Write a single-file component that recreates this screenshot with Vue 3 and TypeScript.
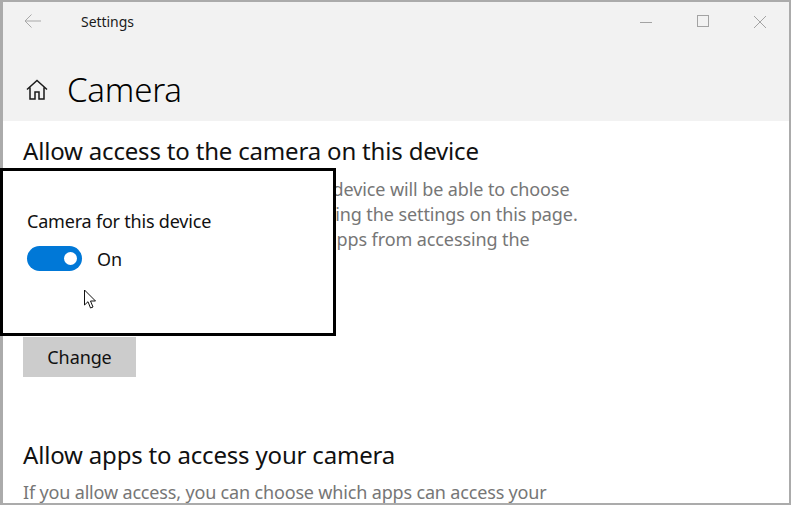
<script setup lang="ts">
interface IntroLine {
  covered: string
  shown: string
  tight: string
}

const intro: IntroLine[] = [
  { covered: 'If you allow access, people using this ', shown: 'device will be able to choose', tight: 'tight-a' },
  { covered: 'if their apps have camera access by us', shown: 'ing the settings on this page.', tight: 'tight-b' },
  { covered: 'Denying access blocks Microsoft Store ', shown: 'apps from accessing the', tight: 'tight-c' },
  { covered: 'camera.', shown: '', tight: '' },
]
</script>

<template>
  <div class="window">
    <header class="head">
      <div class="titlebar">
        <svg class="back" width="18" height="14" viewBox="0 0 18 14" fill="none" stroke="#a8a8a8" stroke-width="1">
          <path d="M1 7H17M7.500 .5L1 7l6.500 6.500" />
        </svg>
        <span class="app-title">Settings</span>
        <div class="controls">
          <svg width="14" height="14" viewBox="0 0 14 14" fill="none" stroke="#a3a3a3"><path d="M1 7.500H13" /></svg>
          <svg width="14" height="14" viewBox="0 0 14 14" fill="none" stroke="#a3a3a3"><rect x="1.500" y=".5" width="11" height="11" /></svg>
          <svg width="14" height="14" viewBox="0 0 14 14" fill="none" stroke="#a3a3a3"><path d="M1 1L13 13M13 1L1 13" /></svg>
        </div>
      </div>
      <div class="page-heading">
        <svg class="home" width="22" height="22" viewBox="0 0 22 22" fill="none" stroke="#1a1a1a" stroke-width="1.500">
          <path d="M1 10.500L11 1.500l10 9M4 8.500v11.500h5v-7h4v7h5V8.500" />
        </svg>
        <h1>Camera</h1>
      </div>
    </header>
    <main class="content">
      <h2>Allow access to the camera on this device</h2>
      <p class="body-text">
        <span v-for="line in intro" :key="line.covered" class="line"><span :class="line.tight">{{ line.covered }}</span>{{ line.shown }}</span>
      </p>
      <p class="status">Camera access for this device is on</p>
      <button class="change">Change</button>
      <h2 class="second">Allow apps to access your camera</h2>
      <p class="body-text last">If you allow access, you can choose which apps can access your</p>
    </main>
    <aside class="callout">
      <div class="callout-label">Camera for this device</div>
      <div class="toggle-row">
        <span class="toggle"><span class="knob"></span></span>
        <span class="toggle-text">On</span>
      </div>
      <svg class="cursor" width="14" height="20" viewBox="0 0 14 20" fill="#fff" stroke="#111" stroke-width="1">
        <path d="M1.500 1V16L5 12.700L7.500 19L10 18L7.500 12H12.500Z" />
      </svg>
    </aside>
  </div>
</template>

<style>
html, body { margin: 0; background: #fff; }
</style>

<style scoped>
.window {
  position: relative;
  display: flex;
  flex-direction: column;
  box-sizing: border-box;
  width: 791px;
  height: 505px;
  background: #fff;
  border: 2px solid #ababab;
  border-width: 2px 2px 2px 3px;
  font-family: "Noto Sans", "Open Sans", sans-serif;
  color: #000;
}
.head {
  flex: none;
  height: 119px;
  background: #f2f2f2;
}
.titlebar {
  display: flex;
  align-items: center;
  height: 38px;
  padding-left: 21px;
}
.back { flex: none; }
.app-title {
  margin-left: 39px;
  font-size: 14px;
  letter-spacing: -0.05px;
  color: #1a1a1a;
}
.controls {
  display: flex;
  gap: 43px;
  margin-left: auto;
  margin-right: 22px;
  margin-top: 1px;
}
.page-heading {
  display: flex;
  align-items: center;
  gap: 19px;
  height: 50px;
  padding: 25px 0 0 23px;
}
.home { flex: none; }
h1 {
  margin: 0;
  font-size: 33px;
  font-weight: 300;
  letter-spacing: -0.2px;
  line-height: 42px;
}
.content {
  flex: 1;
  min-height: 0;
  overflow: hidden;
  padding: 15px 0 0 20px;
}
h2 {
  margin: 0;
  font-size: 24px;
  font-weight: 400;
  letter-spacing: -0.18px;
  line-height: 30px;
  color: #111;
}
.body-text {
  margin: 11px 0 0;
  font-size: 18px;
  line-height: 25px;
  letter-spacing: -0.1px;
  color: #767676;
  white-space: nowrap;
}
.line { display: block; }
.tight-a { letter-spacing: -0.15px; }
.tight-b { letter-spacing: -0.26px; }
.tight-c { letter-spacing: -0.6px; }
.status {
  margin: 8px 0 0;
  font-size: 16px;
  line-height: 22px;
  color: #000;
}
.change {
  display: block;
  box-sizing: border-box;
  width: 113px;
  height: 40px;
  margin-top: 30px;
  padding: 0;
  border: 0;
  background: #cccccc;
  font: inherit;
  font-size: 18px;
  letter-spacing: -0.1px;
  color: #111;
}
.second { margin-top: 63px; }
.body-text.last {
  margin-top: 10px;
  letter-spacing: -0.165px;
}
.callout {
  position: absolute;
  left: -3px;
  top: 166px;
  box-sizing: border-box;
  width: 336px;
  height: 168px;
  padding: 38px 0 0 24px;
  background: #fff;
  border: 3px solid #000;
}
.callout-label {
  font-size: 18px;
  line-height: 24px;
  letter-spacing: -0.2px;
  color: #111;
}
.toggle-row {
  display: flex;
  align-items: center;
  gap: 15px;
  margin-top: 13px;
}
.toggle {
  display: flex;
  align-items: center;
  justify-content: flex-end;
  box-sizing: border-box;
  width: 55px;
  height: 25px;
  padding-right: 5px;
  border-radius: 13px;
  background: #0078d7;
}
.knob {
  width: 13px;
  height: 13px;
  border-radius: 50%;
  background: #fff;
}
.toggle-text {
  font-size: 18px;
  line-height: 24px;
  color: #111;
}
.cursor {
  position: absolute;
  left: 80px;
  top: 118px;
}
</style>
